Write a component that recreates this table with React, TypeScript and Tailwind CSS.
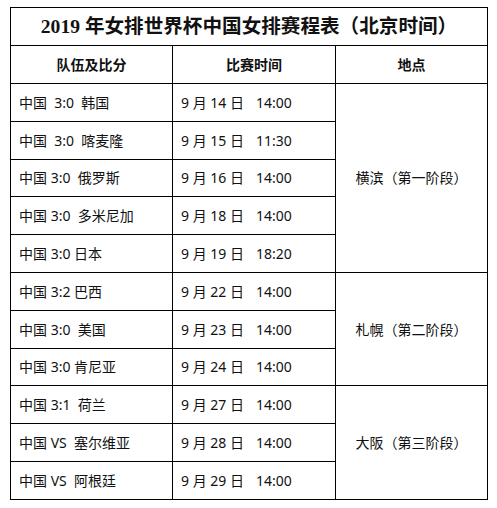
import React from "react";

const rows: { team: string; date: string; time: string }[] = [
  { team: "中国  3:0  韩国", date: "9 月 14 日", time: "14:00" },
  { team: "中国  3:0  喀麦隆", date: "9 月 15 日", time: "11:30" },
  { team: "中国 3:0  俄罗斯", date: "9 月 16 日", time: "14:00" },
  { team: "中国 3:0  多米尼加", date: "9 月 18 日", time: "14:00" },
  { team: "中国 3:0 日本", date: "9 月 19 日", time: "18:20" },
  { team: "中国 3:2 巴西", date: "9 月 22 日", time: "14:00" },
  { team: "中国 3:0  美国", date: "9 月 23 日", time: "14:00" },
  { team: "中国 3:0 肯尼亚", date: "9 月 24 日", time: "14:00" },
  { team: "中国 3:1  荷兰", date: "9 月 27 日", time: "14:00" },
  { team: "中国 VS  塞尔维亚", date: "9 月 28 日", time: "14:00" },
  { team: "中国 VS  阿根廷", date: "9 月 29 日", time: "14:00" },
];

const places: Record<number, { text: string; span: number }> = {
  0: { text: "横滨（第一阶段）", span: 5 },
  5: { text: "札幌（第二阶段）", span: 3 },
  8: { text: "大阪（第三阶段）", span: 3 },
};

export default function App() {
  return (
    <div className="w-[497px] h-[508px] bg-white pt-[7px] pl-[10px]">
      <table
        className="border-collapse w-[477px] table-fixed text-[14px] text-[#111]"
        style={{ fontFamily: '"Noto Sans", "Noto Sans CJK SC", sans-serif' }}
      >
        <colgroup>
          <col className="w-[162px]" />
          <col className="w-[163px]" />
          <col className="w-[152px]" />
        </colgroup>
        <tbody>
          <tr className="h-[38px]">
            <td
              colSpan={3}
              className="border border-black text-center text-[19.6px] font-semibold leading-none p-0"
              style={{ fontFamily: '"Liberation Serif", "Noto Sans CJK SC", serif' }}
            >
              <span className="font-bold">2019</span> 年女排世界杯中国女排赛程表（北京时间）
            </td>
          </tr>
          <tr className="h-[38px]">
            <td className="border border-black text-center font-bold p-0">队伍及比分</td>
            <td className="border border-black text-center font-bold p-0">比赛时间</td>
            <td className="border border-black text-center font-bold p-0">地点</td>
          </tr>
          {rows.map((r, i) => (
            <tr key={i} className="h-[37.8px]">
              <td className="border border-black pl-[8px] p-0 whitespace-pre">{r.team}</td>
              <td className="border border-black pl-[8px] p-0 whitespace-pre">
                <span className="inline-block w-[75px]">{r.date}</span>
                <span>{r.time}</span>
              </td>
              {places[i] && (
                <td rowSpan={places[i].span} className="border border-black text-center p-0">
                  {places[i].text}
                </td>
              )}
            </tr>
          ))}
        </tbody>
      </table>
    </div>
  );
}
